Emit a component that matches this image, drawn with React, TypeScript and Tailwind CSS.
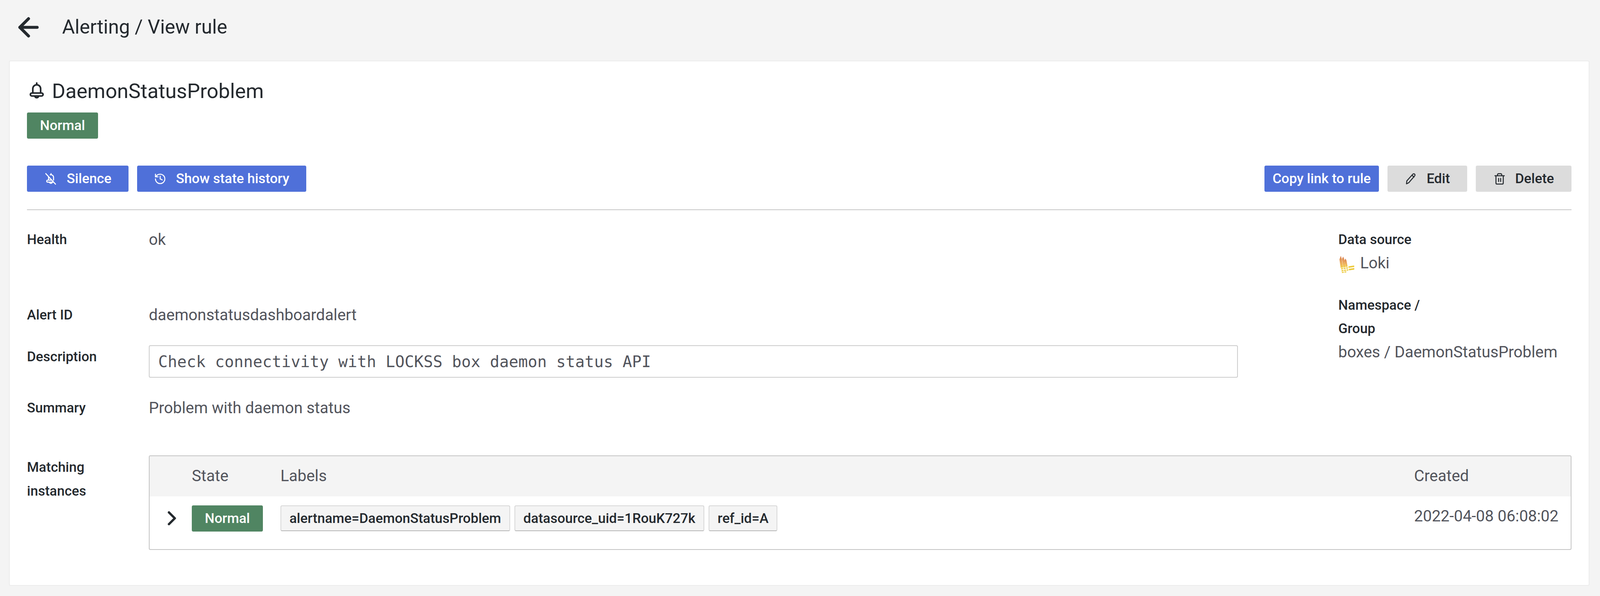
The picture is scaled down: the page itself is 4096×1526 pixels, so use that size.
import type { ReactElement, ReactNode } from 'react'
import { ArrowLeft, ChevronRight, History, Trash2 } from 'lucide-react'

const blue = 'bg-[#4f70d9] text-white'
const grey = 'bg-[#dcdcdc] text-[#24292e]'
const label = 'text-[35px] font-medium leading-[50px]'
const value = 'text-[40.4px] leading-[50px] text-[#52545c]'

function Button({ tone, icon, children, width }: { tone: string; icon?: ReactNode; children: ReactNode; width: string }): ReactElement {
  return (
    <div className={`flex h-[67px] items-center justify-center gap-[24px] rounded-[4px] text-[35px] font-medium ${tone} ${width}`}>
      {icon}
      <span className="pt-[2px]">{children}</span>
    </div>
  )
}

function StateBadge(): ReactElement {
  return (
    <div className="flex h-[67px] w-[182px] items-center justify-center rounded-[4px] bg-[#508562] pt-[2px] text-[35px] font-medium text-white">
      Normal
    </div>
  )
}

function Tag({ children }: { children: ReactNode }): ReactElement {
  return (
    <div className="flex h-[66px] items-center rounded-[4px] border-2 border-[#d8d8d8] border-b-[#b8b8b8] bg-[#f4f4f4] px-[21px] pt-[2px] text-[35px] font-medium text-[#24292e]">
      {children}
    </div>
  )
}

function BellIcon(): ReactElement {
  return (
    <svg width="50" height="50" viewBox="0 0 24 24" fill="none" stroke="#24292e" strokeWidth="2" strokeLinejoin="round" strokeLinecap="round">
      <path d="M12 2.2v1.6" />
      <path d="M7.2 14.5V9.2a4.8 4.8 0 0 1 9.6 0v5.3" />
      <path d="M6 14.5h12a1.6 1.6 0 0 1 0 3.6H6a1.6 1.6 0 0 1 0-3.6z" />
      <path d="M9.8 18.6a2.3 2.3 0 0 0 4.4 0" />
    </svg>
  )
}

function BellSlashIcon(): ReactElement {
  return (
    <svg width="34" height="34" viewBox="0 0 24 24" fill="none" stroke="currentColor" strokeWidth="1.9" strokeLinejoin="round" strokeLinecap="round">
      <path d="M3 2.5l17.5 19" />
      <path d="M12.5 2.5v1.6" />
      <path d="M8 8.6v5.6" />
      <path d="M11 4.6a4.8 4.8 0 0 1 6 4.6v5" />
      <path d="M6.5 14.3h7M6.5 14.3a1.7 1.7 0 0 0 0 3.6h10" />
      <path d="M10 18.4a2.3 2.3 0 0 0 4.4 0" />
    </svg>
  )
}

function PencilIcon(): ReactElement {
  return (
    <svg width="32" height="32" viewBox="0 0 24 24" fill="none" stroke="currentColor" strokeWidth="1.9" strokeLinejoin="round" strokeLinecap="round">
      <path d="M3.5 21.5l.6-5.6L15.6 3a2.4 2.4 0 0 1 3.6 3.2L7.8 19.4z" />
      <path d="M14 5l4 3.4" />
    </svg>
  )
}

function LokiIcon(): ReactElement {
  return (
    <svg width="38" height="44" viewBox="0 0 38 44" className="mt-[6px] ml-[3px] shrink-0">
      <defs>
        <linearGradient id="loki" x1="0" y1="0" x2="0" y2="1">
          <stop offset="0" stopColor="#d97f52" />
          <stop offset="0.65" stopColor="#eeb05a" />
          <stop offset="1" stopColor="#f2d04a" />
        </linearGradient>
      </defs>
      <g fill="url(#loki)">
        <path d="M0 9l3.500-9 2.500 8 3.500 22-6.500 1z" />
        <path d="M6.500 8l3-6 2.500 6 3.500 21-5.500.8z" />
        <path d="M12.500 12l3-5 2.500 5 3 16-5 .8z" />
      </g>
      <g fill="#ecc93a">
        <path d="M4 32l5-.7.5 3-5 .7zM10.500 31l5-.7.5 3-5 .7zM17 30l4.500-.6.5 3-4.500.6zM5 37l5-.7.5 3-5 .7zM11.500 36l5-.7.5 3-5 .7zM18 35l4.500-.6.5 3-4.500.6zM6 41.500l5-.7.4 2.400-5 .7zM12.500 40.500l5-.7.4 2.400-5 .7z" />
        <path d="M23 27l14.500-2.200.6 3.800-14.500 2.200zM24 33.500l14-2.200.5 3.800-14 2.200z" />
      </g>
    </svg>
  )
}

export default function App(): ReactElement {
  return (
    <div className="flex h-[1526px] w-[4096px] flex-col bg-[#f4f4f4] font-['Roboto',sans-serif] text-[#24292e]">
      <header className="flex h-[155px] shrink-0 items-center pb-[16px] pl-[35px]">
        <ArrowLeft size={76} strokeWidth={2.4} className="text-[#24292e]" />
        <h1 className="ml-[48px] text-[50px] font-normal">Alerting / View rule</h1>
      </header>

      <main className="ml-[23px] mr-[27px] flex h-[1345px] flex-col rounded-[4px] border-2 border-[#ececec] bg-white px-[44px] pt-[38px]">
        <div className="flex items-center gap-[14px]">
          <BellIcon />
          <span className="text-[52.5px] leading-[76px]">DaemonStatusProblem</span>
        </div>
        <div className="mt-[17px]">
          <StateBadge />
        </div>

        <div className="mt-[69px] flex items-center">
          <Button tone={blue} width="w-[260px]" icon={<BellSlashIcon />}>Silence</Button>
          <div className="ml-[22px]">
            <Button tone={blue} width="w-[433px]" icon={<History size={32} strokeWidth={1.9} />}>Show state history</Button>
          </div>
          <div className="ml-auto flex gap-[22px]">
            <Button tone={blue} width="w-[293px]">Copy link to rule</Button>
            <Button tone={grey} width="w-[204px]" icon={<PencilIcon />}>Edit</Button>
            <Button tone={grey} width="w-[245px]" icon={<Trash2 size={32} strokeWidth={1.9} />}>Delete</Button>
          </div>
        </div>

        <div className="mt-[45px] h-[2px] bg-[#c8c8c8]" />

        <div className="flex">
          <div className="w-[3100px] shrink-0">
            <div className="flex pt-[51px]">
              <div className={`w-[312px] shrink-0 ${label}`}>Health</div>
              <div className={value}>ok</div>
            </div>
            <div className="mt-[143px] flex">
              <div className={`w-[312px] shrink-0 ${label}`}>Alert ID</div>
              <div className={value}>daemonstatusdashboardalert</div>
            </div>
            <div className="mt-[52px] flex">
              <div className={`w-[312px] shrink-0 pt-[5px] ${label}`}>Description</div>
              <div className="flex h-[83px] flex-1 items-center rounded-[4px] border-2 border-[#cccccc] px-[22px] pt-[3px] font-['DejaVu_Sans_Mono',monospace] text-[40.3px] text-[#52545c]">
                Check connectivity with LOCKSS box daemon status API
              </div>
            </div>
            <div className="mt-[53px] flex">
              <div className={`w-[312px] shrink-0 ${label}`}>Summary</div>
              <div className={value}>Problem with daemon status</div>
            </div>
          </div>
          <div className="ml-[257px] shrink-0 pt-[51px]">
            <div className={label}>Data source</div>
            <div className={`mt-[10px] flex items-start gap-[15px] ${value}`}>
              <LokiIcon />
              <span>Loki</span>
            </div>
            <div className="mt-[53px] text-[35px] font-medium leading-[60px]">Namespace /<br />Group</div>
            <div className={`mt-[5px] ${value}`}>boxes / DaemonStatusProblem</div>
          </div>
        </div>

        <div className="mt-[96px] flex">
          <div className="w-[312px] shrink-0 text-[35px] font-medium leading-[61px]">Matching<br />instances</div>
          <div className="h-[242px] flex-1 overflow-hidden rounded-[4px] border-2 border-[#c4c4c4]">
            <div className="flex h-[103px] items-center bg-[#f4f4f4] text-[40.4px] text-[#52545c]">
              <div className="ml-[108px] w-[227px]">State</div>
              <div>Labels</div>
              <div className="ml-auto w-[401px]">Created</div>
            </div>
            <div className="flex items-start pt-[23px]">
              <div className="flex h-[66px] w-[108px] items-center justify-center pl-[6px]">
                <ChevronRight size={60} strokeWidth={2.4} />
              </div>
              <StateBadge />
              <div className="ml-[45px] flex gap-[11px]">
                <Tag>alertname=DaemonStatusProblem</Tag>
                <Tag>datasource_uid=1RouK727k</Tag>
                <Tag>ref_id=A</Tag>
              </div>
              <div className="ml-auto w-[401px] text-[40.4px] leading-[56px] text-[#52545c]">2022-04-08 06:08:02</div>
            </div>
          </div>
        </div>
      </main>
    </div>
  )
}
